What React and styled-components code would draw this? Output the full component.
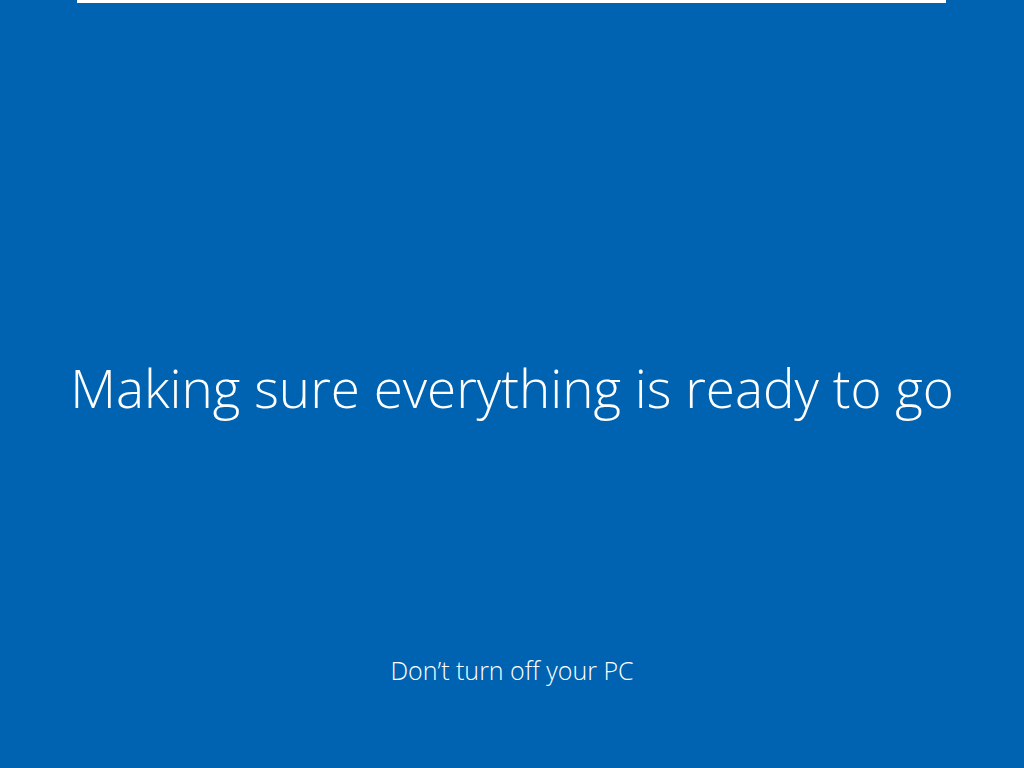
import React from "react";
import styled, { createGlobalStyle } from "styled-components";

const GlobalStyle = createGlobalStyle`
  html, body, #root {
    margin: 0;
    padding: 0;
    height: 100%;
  }
  body {
    background: #0063b1;
    font-family: "Open Sans", "Noto Sans", "Liberation Sans", sans-serif;
    overflow: hidden;
  }
`;

const Screen = styled.div`
  display: flex;
  flex-direction: column;
  align-items: center;
  width: 1024px;
  height: 768px;
  background: #0063b1;
  color: #ffffff;
`;

const TopBar = styled.div`
  align-self: stretch;
  height: 3px;
  margin: 0 78px 0 77px;
  background: #ffffff;
`;

const Title = styled.h1`
  margin: 345px 0 0;
  font-size: 53px;
  font-weight: 300;
  line-height: 80px;
  letter-spacing: 0;
  white-space: nowrap;
`;

const Note = styled.p`
  margin: 226px 0 0;
  font-size: 25px;
  font-weight: 300;
  line-height: 32px;
  white-space: nowrap;
`;

export default function App() {
  return (
    <>
      <GlobalStyle />
      <Screen>
        <TopBar />
        <Title>Making sure everything is ready to go</Title>
        <Note>Don’t turn off your PC</Note>
      </Screen>
    </>
  );
}
